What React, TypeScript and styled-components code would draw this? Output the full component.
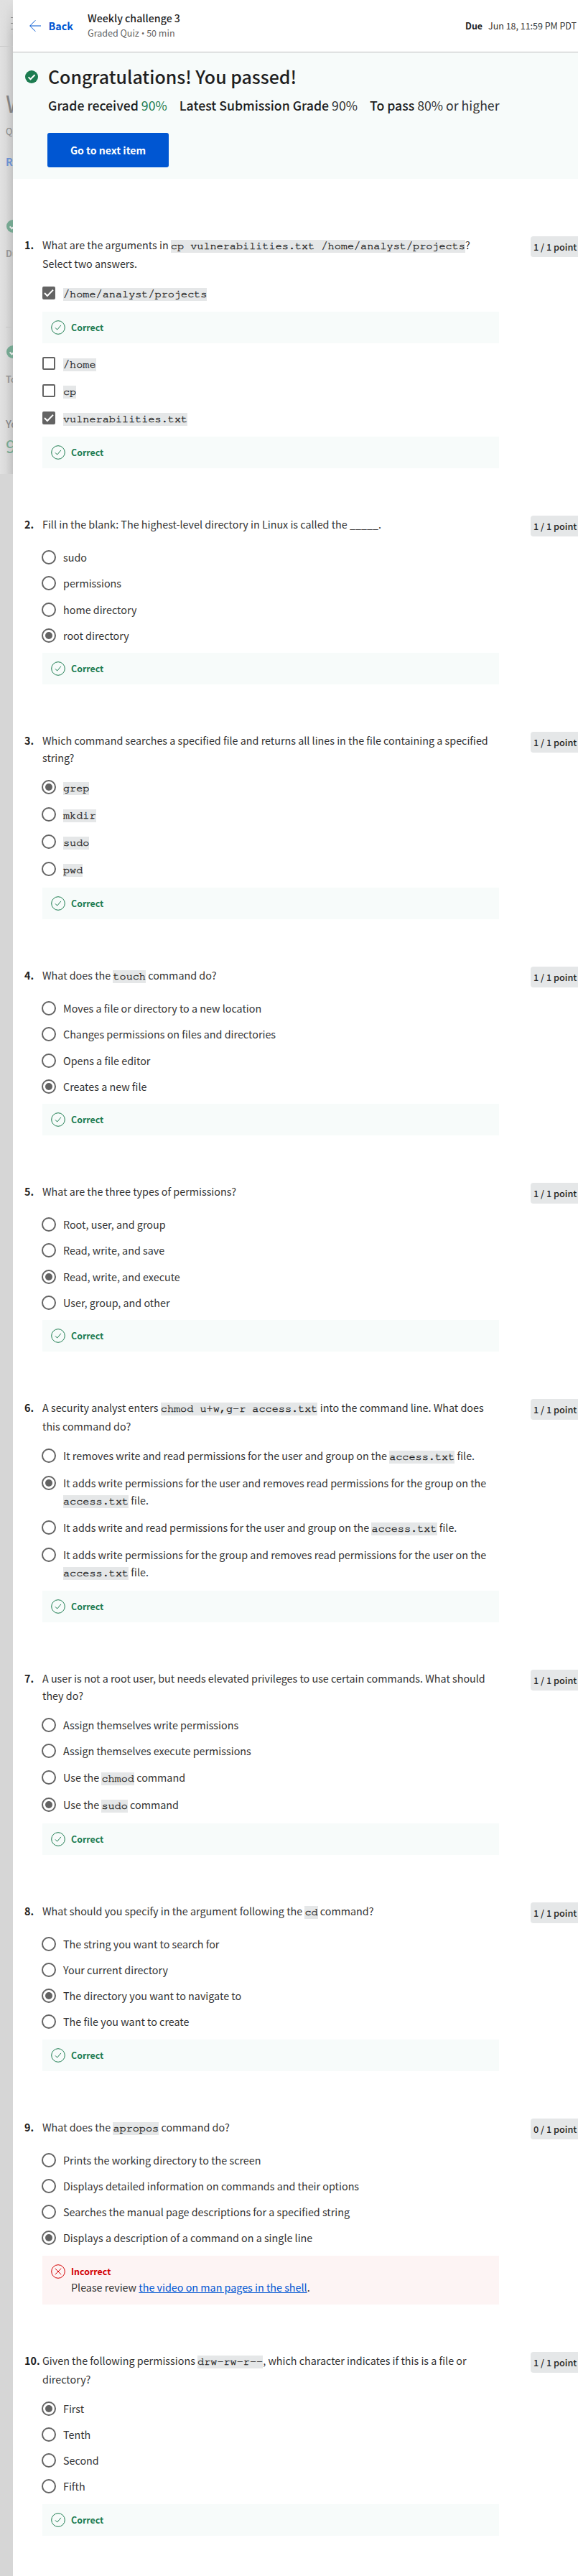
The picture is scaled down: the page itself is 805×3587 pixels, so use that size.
import React, { ReactNode } from "react";
import styled, { createGlobalStyle, css } from "styled-components";

const GlobalStyle = createGlobalStyle`
  *, *::before, *::after { box-sizing: border-box; }
  body {
    margin: 0;
    background: #fff;
    color: #1f1f1f;
    font-family: "Noto Sans CJK SC", "Open Sans", sans-serif;
    font-size: 14.33px;
    line-height: 24px;
    overflow: hidden;
  }
  h1, p { margin: 0; }
`;

const Page = styled.div`
  display: grid;
  grid-template-columns: 18px 787px;
  width: 805px;
  height: 3587px;
  overflow: hidden;
`;

/* Dimmed course page that stays visible behind the quiz sheet */
const Backdrop = styled.aside`
  background: #d6d6d6;
  overflow: hidden;
`;

const Behind = styled.div`
  height: 660px;
  background: linear-gradient(to bottom, #e0e0e0 0, rgba(224, 224, 224, 0) 50px),
    linear-gradient(to right, #e1e1e1 0, #dadada 45%, #c4c4c4 100%);
  display: flex;
  flex-direction: column;
  overflow: hidden;
  white-space: nowrap;
`;

const BehindNav = styled.div`
  flex: none;
  height: 65px;
  padding: 24px 0 0 15px;
  border-bottom: 1px solid #cbcbcb;
  svg { display: block; }
`;

const BehindText = styled.span<{ $top: number; $size: number; $line: number; $color: string; $weight?: number }>`
  flex: none;
  margin: ${(p) => p.$top}px 0 0 8px;
  font-size: ${(p) => p.$size}px;
  line-height: ${(p) => p.$line}px;
  color: ${(p) => p.$color};
  font-weight: ${(p) => p.$weight ?? 400};
`;

const BehindCheck = styled.div<{ $top: number }>`
  flex: none;
  height: 18px;
  margin: ${(p) => p.$top}px 0 0 9px;
  svg { display: block; }
`;

const BehindRule = styled.div`
  flex: none;
  height: 1px;
  margin: 92px 0 0 8px;
  background: #c6c6c6;
`;

const Sheet = styled.main`
  background: #fff;
  overflow: hidden;
`;

const Header = styled.header`
  display: flex;
  align-items: center;
  height: 73px;
  padding: 0 2px 0 23px;
  border-bottom: 1px solid #bdbdbd;
`;

const BackLink = styled.a`
  display: flex;
  align-items: center;
  gap: 10.5px;
  width: 81px;
  color: #0056d2;
  font-weight: 700;
`;

const Heading = styled.div`
  flex: 1;
  line-height: 20px;
  display: flex;
  flex-direction: column;
  gap: 1px;
`;

const Title = styled.div`
  font-size: 14.2px;
  font-weight: 500;
`;

const Subtitle = styled.div`
  font-size: 12.54px;
  color: #636363;
`;

const Bullet = styled.span`
  font-family: "Open Sans", sans-serif;
`;

const Due = styled.div`
  display: flex;
  gap: 8px;
  font-size: 12.46px;
  line-height: 20px;
  color: #333;
  b { font-weight: 700; color: #1f1f1f; }
`;

const Banner = styled.section`
  display: grid;
  grid-template-columns: 32px 1fr;
  height: 176px;
  padding: 17px 0 0 17px;
  background: #f7fbfa;
  svg { margin-top: 8px; }
`;

const BannerTitle = styled.h1`
  font-size: 24.92px;
  font-weight: 500;
  line-height: 32px;
`;

const Grades = styled.div`
  display: flex;
  gap: 17px;
  margin-top: 12px;
  font-size: 17.68px;
  white-space: nowrap;
`;

const Grade = styled.span<{ $pass?: boolean }>`
  color: #333;
  b { font-weight: 500; color: #1f1f1f; }
  ${(p) => p.$pass && css` color: #1d7c50; `}
`;

const NextButton = styled.button`
  display: block;
  width: 169px;
  height: 48px;
  margin: 27px 0 0 -1px;
  padding: 0;
  border: 0;
  border-radius: 3px;
  background: #0056d2;
  color: #fff;
  font: inherit;
  font-size: 14.1px;
  font-weight: 700;
`;

const Questions = styled.div`
  padding: 80px 0 0 16px;
`;

const QuestionRow = styled.section`
  display: grid;
  grid-template-columns: 25px 636px 110px;
  padding-bottom: 66px;
`;

const Numeral = styled.div`
  font-weight: 700;
  white-space: nowrap;
`;

const Prompt = styled.div`
  min-height: 29px;
  margin-bottom: 17px;
  color: #333;
`;

const Points = styled.div`
  width: 66px;
  height: 29px;
  margin-left: 44px;
  padding-left: 4px;
  border-radius: 4px 0 0 4px;
  background: #e5e7e8;
  font-size: 12.7px;
  font-weight: 500;
  line-height: 29px;
  white-space: nowrap;
`;

const Code = styled.code`
  padding: 1px 0 2px;
  background: #e5e7e8;
  color: #1f1f1f;
  font-family: "FreeMono", "Liberation Mono", monospace;
  font-size: 15.2px;
  line-height: 24px;
  -webkit-text-stroke: 0.35px #1f1f1f;
`;

const Option = styled.label`
  display: grid;
  grid-template-columns: 20px 1fr;
  column-gap: 10px;
  margin: 0 0 12.25px -1px;
  color: #333;
  &:has(code) { margin-bottom: 12px; }
`;

const Radio = styled.span<{ $on?: boolean }>`
  display: flex;
  align-items: center;
  justify-content: center;
  width: 20px;
  height: 20px;
  margin-top: 2px;
  border: 2px solid #636363;
  border-radius: 50%;
  &::after {
    content: "";
    display: ${(p) => (p.$on ? "block" : "none")};
    width: 10px;
    height: 10px;
    border-radius: 50%;
    background: #636363;
  }
`;

const Box = styled.span<{ $on?: boolean }>`
  display: flex;
  align-items: center;
  justify-content: center;
  width: 18px;
  height: 18px;
  margin: 3px 1px 0;
  border: 2px solid #636363;
  border-radius: 2px;
  background: ${(p) => (p.$on ? "#636363" : "#fff")};
`;

const Feedback = styled.div<{ $bad?: boolean }>`
  display: grid;
  grid-template-columns: 28px 1fr;
  width: 636px;
  padding: 12px 0 12px 12px;
  background: ${(p) => (p.$bad ? "#fdf4f4" : "#f7fbfa")};
  & + label { margin-top: 16px; }
  svg { display: block; }
`;

const Verdict = styled.div<{ $bad?: boolean }>`
  color: ${(p) => (p.$bad ? "#d30001" : "#1d7c50")};
  font-size: 12.4px;
  font-weight: 700;
  line-height: 20px;
`;

const Note = styled.p`
  color: #333;
  a { color: #0056d2; text-decoration: underline; }
`;

const SolidCheck = ({ color = "#1d7c50", tick = "#fff" }: { color?: string; tick?: string }) => (
  <svg width="18" height="18" viewBox="0 0 18 18">
    <circle cx="9" cy="9" r="9" fill={color} />
    <path d="M4.6 9.4l2.9 2.9 6-6" fill="none" stroke={tick} strokeWidth="2" />
  </svg>
);

const Tick = () => (
  <svg width="14" height="14" viewBox="0 0 14 14">
    <path d="M1 7l3.9 4L13 2.6" fill="none" stroke="#fff" strokeWidth="2" />
  </svg>
);

const Result = ({ bad, children }: { bad?: boolean; children?: ReactNode }) => (
  <Feedback $bad={bad}>
    <svg width="20" height="20" viewBox="0 0 20 20" fill="none" stroke={bad ? "#d30001" : "#1d7c50"}>
      <circle cx="10" cy="10" r="9.3" />
      <path d={bad ? "M5.8 5.8l8.4 8.4M14.2 5.8l-8.4 8.4" : "M6 10.4l2.7 2.7 5.2-6.2"} />
    </svg>
    <div>
      <Verdict $bad={bad}>{bad ? "Incorrect" : "Correct"}</Verdict>
      {children}
    </div>
  </Feedback>
);

type Answer = { text: ReactNode; on?: boolean; result?: boolean };
type Quiz = { prompt: ReactNode; multi?: boolean; points?: string; answers: Answer[]; footer?: ReactNode };

const access = <Code>access.txt</Code>;

const quiz: Quiz[] = [
  {
    prompt: <>What are the arguments in <Code>cp vulnerabilities.txt /home/analyst/projects</Code>? Select two answers.</>,
    multi: true,
    answers: [
      { text: <Code>/home/analyst/projects</Code>, on: true, result: true },
      { text: <Code>/home</Code> },
      { text: <Code>cp</Code> },
      { text: <Code>vulnerabilities.txt</Code>, on: true },
    ],
  },
  {
    prompt: "Fill in the blank: The highest-level directory in Linux is called the _____.",
    answers: [{ text: "sudo" }, { text: "permissions" }, { text: "home directory" }, { text: "root directory", on: true }],
  },
  {
    prompt: "Which command searches a specified file and returns all lines in the file containing a specified string?",
    answers: [
      { text: <Code>grep</Code>, on: true },
      { text: <Code>mkdir</Code> },
      { text: <Code>sudo</Code> },
      { text: <Code>pwd</Code> },
    ],
  },
  {
    prompt: <>What does the <Code>touch</Code> command do?</>,
    answers: [
      { text: "Moves a file or directory to a new location" },
      { text: "Changes permissions on files and directories" },
      { text: "Opens a file editor" },
      { text: "Creates a new file", on: true },
    ],
  },
  {
    prompt: "What are the three types of permissions?",
    answers: [
      { text: "Root, user, and group" },
      { text: "Read, write, and save" },
      { text: "Read, write, and execute", on: true },
      { text: "User, group, and other" },
    ],
  },
  {
    prompt: <>A security analyst enters <Code>chmod u+w,g-r access.txt</Code> into the command line. What does this command do?</>,
    answers: [
      { text: <>It removes write and read permissions for the user and group on the {access} file.</> },
      { text: <>It adds write permissions for the user and removes read permissions for the group on the {access} file.</>, on: true },
      { text: <>It adds write and read permissions for the user and group on the {access} file.</> },
      { text: <>It adds write permissions for the group and removes read permissions for the user on the {access} file.</> },
    ],
  },
  {
    prompt: "A user is not a root user, but needs elevated privileges to use certain commands. What should they do?",
    answers: [
      { text: "Assign themselves write permissions" },
      { text: "Assign themselves execute permissions" },
      { text: <>Use the <Code>chmod</Code> command</> },
      { text: <>Use the <Code>sudo</Code> command</>, on: true },
    ],
  },
  {
    prompt: <>What should you specify in the argument following the <Code>cd</Code> command?</>,
    answers: [
      { text: "The string you want to search for" },
      { text: "Your current directory" },
      { text: "The directory you want to navigate to", on: true },
      { text: "The file you want to create" },
    ],
  },
  {
    prompt: <>What does the <Code>apropos</Code> command do?</>,
    points: "0 / 1 point",
    answers: [
      { text: "Prints the working directory to the screen" },
      { text: "Displays detailed information on commands and their options" },
      { text: "Searches the manual page descriptions for a specified string" },
      { text: "Displays a description of a command on a single line", on: true },
    ],
    footer: (
      <Result bad>
        <Note>Please review <a>the video on man pages in the shell</a>.</Note>
      </Result>
    ),
  },
  {
    prompt: <>Given the following permissions <Code>drw-rw-r--</Code>, which character indicates if this is a file or directory?</>,
    answers: [{ text: "First", on: true }, { text: "Tenth" }, { text: "Second" }, { text: "Fifth" }],
  },
];

const Question = ({ index, item }: { index: number; item: Quiz }) => (
  <QuestionRow>
    <Numeral>{index}.</Numeral>
    <div>
      <Prompt>{item.prompt}</Prompt>
      {item.answers.map((a, i) => (
        <React.Fragment key={i}>
          <Option>
            {item.multi ? <Box $on={a.on}>{a.on && <Tick />}</Box> : <Radio $on={a.on} />}
            <span>{a.text}</span>
          </Option>
          {a.result && <Result />}
        </React.Fragment>
      ))}
      {item.footer ?? <Result />}
    </div>
    <Points>{item.points ?? "1 / 1 point"}</Points>
  </QuestionRow>
);

export default function App() {
  return (
    <>
      <GlobalStyle />
      <Page>
        <Backdrop>
          <Behind>
            <BehindNav>
              <svg width="18" height="18" viewBox="0 0 18 18" stroke="#8b8b8b"><path d="M0 .5h18M0 8.5h18M0 16.5h18" /></svg>
            </BehindNav>
            <BehindText $top={58} $size={32} $line={40} $color="#828282">Week 3</BehindText>
            <BehindText $top={10} $size={12.54} $line={20} $color="#828282">Quiz</BehindText>
            <BehindText $top={20} $size={14.33} $line={24} $color="#6b90cf" $weight={700}>Review</BehindText>
            <BehindCheck $top={69}><SolidCheck color="#75a791" tick="#e6e6e6" /></BehindCheck>
            <BehindText $top={19} $size={12.54} $line={20} $color="#959595" $weight={700}>Due</BehindText>
            <BehindRule />
            <BehindCheck $top={25}><SolidCheck color="#75a791" tick="#e6e6e6" /></BehindCheck>
            <BehindText $top={19} $size={12.54} $line={20} $color="#959595" $weight={700}>To pass</BehindText>
            <BehindText $top={40} $size={14.33} $line={24} $color="#858585" $weight={500}>Your grade</BehindText>
            <BehindText $top={2} $size={25} $line={32} $color="#75a791">90%</BehindText>
          </Behind>
        </Backdrop>
        <Sheet>
          <Header>
            <BackLink>
              <svg width="16" height="16" viewBox="0 0 16 16" fill="none" stroke="#0056d2"><path d="M16 8H.8M8.3.3L.7 8l7.6 7.7" /></svg>
              Back
            </BackLink>
            <Heading>
              <Title>Weekly challenge 3</Title>
              <Subtitle>Graded Quiz <Bullet>•</Bullet> 50 min</Subtitle>
            </Heading>
            <Due><b>Due</b><span>Jun 18, 11:59 PM PDT</span></Due>
          </Header>
          <Banner>
            <SolidCheck />
            <div>
              <BannerTitle>Congratulations! You passed!</BannerTitle>
              <Grades>
                <Grade $pass><b>Grade received</b> 90%</Grade>
                <Grade><b>Latest Submission Grade</b> 90%</Grade>
                <Grade><b>To pass</b> 80% or higher</Grade>
              </Grades>
              <NextButton>Go to next item</NextButton>
            </div>
          </Banner>
          <Questions>
            {quiz.map((item, i) => <Question key={i} index={i + 1} item={item} />)}
          </Questions>
        </Sheet>
      </Page>
    </>
  );
}
